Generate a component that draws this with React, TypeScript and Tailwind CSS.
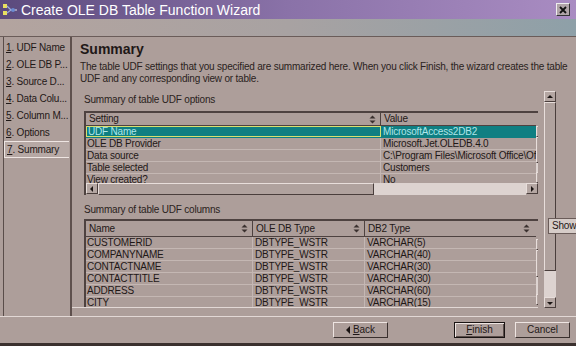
import React from "react";

// --- wizard steps on the left ---
const steps = [
  { n: "1", label: "UDF Name" },
  { n: "2", label: "OLE DB P..." },
  { n: "3", label: "Source D..." },
  { n: "4", label: "Data Colu..." },
  { n: "5", label: "Column M..." },
  { n: "6", label: "Options" },
  { n: "7", label: "Summary" },
];

const options = [
  ["UDF Name", "MicrosoftAccess2DB2"],
  ["OLE DB Provider", "Microsoft.Jet.OLEDB.4.0"],
  ["Data source", "C:\\Program Files\\Microsoft Office\\Office\\Samples"],
  ["Table selected", "Customers"],
  ["View created?", "No"],
];

const columns = [
  ["CUSTOMERID", "DBTYPE_WSTR", "VARCHAR(5)"],
  ["COMPANYNAME", "DBTYPE_WSTR", "VARCHAR(40)"],
  ["CONTACTNAME", "DBTYPE_WSTR", "VARCHAR(30)"],
  ["CONTACTTITLE", "DBTYPE_WSTR", "VARCHAR(30)"],
  ["ADDRESS", "DBTYPE_WSTR", "VARCHAR(60)"],
  ["CITY", "DBTYPE_WSTR", "VARCHAR(15)"],
];

const SortIcon = () => (
  <svg width="7" height="9" viewBox="0 0 7 9" className="shrink-0">
    <path d="M3.5 0.5 L6.5 3.5 H0.5 Z" fill="#3a302e" />
    <path d="M3.5 8.5 L6.5 5.5 H0.5 Z" fill="#3a302e" />
  </svg>
);

const Arrow = ({ dir }: { dir: "up" | "down" | "left" | "right" }) => {
  const d = {
    up: "M1 5 L4 2 L7 5 Z",
    down: "M1 3 L4 6 L7 3 Z",
    left: "M5 1 L2 4 L5 7 Z",
    right: "M3 1 L6 4 L3 7 Z",
  }[dir];
  return (
    <div className="w-[12px] h-[11px] bg-[#b4a6a2] border border-t-[#e8dedb] border-l-[#e8dedb] border-b-[#4a3e3c] border-r-[#4a3e3c] flex items-center justify-center shrink-0">
      <svg width="8" height="8" viewBox="0 0 8 8">
        <path d={d} fill="#1a1413" />
      </svg>
    </div>
  );
};

const VScroll = ({ h, thumb }: { h: string; thumb: string }) => (
  <div className={`w-[12px] ${h} flex flex-col shrink-0`}>
    <Arrow dir="up" />
    <div className={`${thumb} shrink-0 border border-t-[#e8dedb] border-l-[#e8dedb] border-b-[#4a3e3c] border-r-[#4a3e3c] bg-[#b0a29e]`} />
    <div className="flex-1 bg-[#ddd3d0]" />
    <Arrow dir="down" />
  </div>
);

export default function App() {
  return (
    <div className="relative w-[576px] h-[346px] overflow-hidden bg-[#ad9e9a] flex flex-col font-['Liberation_Sans',Arial,sans-serif] text-[10px] tracking-[-0.2px] text-[#1f1817] leading-none">
      {/* title bar */}
      <div className="h-[19px] shrink-0 flex items-center bg-gradient-to-r from-[#5b4a7d] via-[#8a72a8] to-[#a98cc2] pl-[2px] pr-[6px] tracking-normal">
        <svg width="16" height="14" viewBox="0 0 16 14" className="shrink-0">
          <rect x="1" y="1" width="4" height="4" fill="#e8e060" />
          <rect x="1" y="8" width="4" height="4" fill="#e8e060" />
          <path d="M5 3 L9 7 L5 10" stroke="#9ad" strokeWidth="1.2" fill="none" />
          <path d="M9 7 H15" stroke="#ccd" strokeWidth="1.2" />
          <circle cx="11" cy="7" r="2" fill="#6a8ad0" />
        </svg>
        <span className="ml-[3px] text-white text-[14px]">Create OLE DB Table Function Wizard</span>
        <div className="ml-auto w-[14px] h-[13px] bg-[#b0a4a8] border border-t-[#eee] border-l-[#eee] border-b-[#333] border-r-[#333] flex items-center justify-center">
          <svg width="8" height="8" viewBox="0 0 8 8">
            <path d="M1 1 L7 7 M7 1 L1 7" stroke="#111" strokeWidth="1.8" />
          </svg>
        </div>
      </div>

      {/* band below title */}
      <div className="h-[18px] shrink-0 bg-gradient-to-r from-[#b3a49f] via-[#a8a2a2] to-[#8ea0a8] border-b border-[#6a5c59]" />

      {/* main area */}
      <div className="flex h-[280px] shrink-0 border-b border-[#e2d8d5]">
        {/* steps */}
        <nav className="w-[69px] shrink-0 ml-[3px] border-l border-[#5a4d4a] border-r-2 border-r-[#5e504d] flex flex-col pt-[2px]">
          {steps.map((s) => (
            <div
              key={s.n}
              className={`h-[17px] flex items-center pl-[2px] whitespace-nowrap ${
                s.n === "7" ? "bg-[#b6a8a4] border border-[#eee5e2] border-r-0 pl-[1px] mr-[1px]" : ""
              }`}
            >
              <span className="underline">{s.n}</span>
              <span>.&nbsp;{s.label}</span>
            </div>
          ))}
        </nav>

        {/* content */}
        <div className="flex-1 flex flex-col min-w-0">
          <div className="pl-[8px] pt-[3px]">
            <h1 className="text-[14px] font-bold h-[18px] flex items-center tracking-normal">Summary</h1>
            <p className="mt-[3px] leading-[12px] text-[#2a2220] whitespace-nowrap">
              The table UDF settings that you specified are summarized here. When you click Finish, the wizard creates the table
              <br />
              UDF and any corresponding view or table.
            </p>
          </div>

          <div className="flex mt-[6px] h-[217px] shrink-0">
            {/* scrolled area */}
            <div className="w-[466px] pl-[12px] flex flex-col overflow-hidden border-b border-[#e2d8d5]">
              <div className="h-[14px] mt-[2px] flex items-center text-[#2a2220] shrink-0">Summary of table UDF options</div>

              {/* options table */}
              <div className="mt-[4px] w-[464px] border-t-2 border-l-2 border-[#4e4240] flex flex-col shrink-0">
                <div className="flex">
                  <div className="flex-1 min-w-0">
                    <div className="flex h-[13px] border-b border-[#4e4240]">
                      <div className="w-[295px] flex items-center justify-between pl-[3px] pr-[4px] border-r border-[#4e4240]">
                        <span>Setting</span>
                        <SortIcon />
                      </div>
                      <div className="flex-1 flex items-center pl-[3px]">Value</div>
                    </div>
                    <div className="h-[57px] overflow-hidden">
                      {options.map(([k, v], i) => (
                        <div
                          key={k}
                          className={`flex h-[12px] border-b ${
                            i === 0 ? "bg-[#0f7f82] text-[#aee6ea] border-[#0f7f82]" : "border-[#c4b7b3]"
                          }`}
                        >
                          <div
                            className={`w-[295px] flex items-center pl-[1px] whitespace-nowrap ${
                              i === 0 ? "border border-[#d8e070]" : "border-r border-[#c4b7b3]"
                            }`}
                          >
                            {k}
                          </div>
                          <div className="flex-1 flex items-center pl-[2px] whitespace-nowrap overflow-hidden">{v}</div>
                        </div>
                      ))}
                    </div>
                  </div>
                  <div className="w-[12px] pt-[13px] shrink-0">
                    <VScroll h="h-[57px]" thumb="h-[26px]" />
                  </div>
                </div>
                {/* horizontal scrollbar */}
                <div className="flex h-[12px] w-[452px]">
                  <Arrow dir="left" />
                  <div className="w-[276px] border border-t-[#e8dedb] border-l-[#e8dedb] border-b-[#4a3e3c] border-r-[#4a3e3c] bg-[#b0a29e]" />
                  <div className="flex-1 bg-[#ddd3d0]" />
                  <Arrow dir="right" />
                </div>
              </div>

              <div className="h-[14px] mt-[8px] flex items-center text-[#2a2220] shrink-0">Summary of table UDF columns</div>

              {/* columns table */}
              <div className="mt-[2px] w-[464px] border-t-2 border-l-2 border-[#4e4240] flex shrink-0">
                <div className="flex-1 min-w-0">
                  <div className="flex h-[16px] border-b border-[#4e4240]">
                    <div className="w-[167px] flex items-center justify-between pl-[3px] pr-[4px] border-r border-[#4e4240]">
                      <span>Name</span>
                      <SortIcon />
                    </div>
                    <div className="w-[112px] flex items-center justify-between pl-[3px] pr-[4px] border-r border-[#4e4240]">
                      <span>OLE DB Type</span>
                      <SortIcon />
                    </div>
                    <div className="flex-1 flex items-center justify-between pl-[3px] pr-[6px]">
                      <span>DB2 Type</span>
                      <SortIcon />
                    </div>
                  </div>
                  {columns.map(([a, b, c]) => (
                    <div key={a} className="flex h-[12px] border-b border-[#c4b7b3]">
                      <div className="w-[167px] flex items-center pl-[1px] border-r border-[#c4b7b3]">{a}</div>
                      <div className="w-[112px] flex items-center pl-[2px] border-r border-[#c4b7b3]">{b}</div>
                      <div className="flex-1 flex items-center pl-[2px]">{c}</div>
                    </div>
                  ))}
                </div>
                <div className="w-[12px] pt-[18px] shrink-0">
                  <VScroll h="h-[66px]" thumb="h-[27px]" />
                </div>
              </div>
            </div>

            {/* outer scrollbar */}
            <div className="ml-[6px] flex flex-col">
              <VScroll h="h-[217px]" thumb="h-[169px]" />
            </div>
          </div>
        </div>
      </div>

      {/* buttons */}
      <div className="flex-1 flex items-start pt-[5px] pl-[333px] border-b-[3px] border-[#3a302e] tracking-normal">
        <button className="w-[55px] h-[16px] bg-[#ad9e9a] border border-t-[#eee5e2] border-l-[#eee5e2] border-b-[#3a302e] border-r-[#3a302e] flex items-center justify-center text-[10px]">
          <svg width="5" height="8" viewBox="0 0 5 8" className="mr-[2px]">
            <path d="M4 0 L0 4 L4 8 Z" fill="#1a1413" />
          </svg>
          <span className="underline">B</span>ack
        </button>
        <button className="ml-[66px] w-[51px] h-[16px] bg-[#ad9e9a] border border-[#1a1413] flex items-center justify-center text-[10px] shadow-[inset_1px_1px_0_#eee5e2,inset_-1px_-1px_0_#5a4d4a]">
          <span className="underline">F</span>inish
        </button>
        <button className="ml-[10px] w-[55px] h-[16px] bg-[#ad9e9a] border border-t-[#eee5e2] border-l-[#eee5e2] border-b-[#3a302e] border-r-[#3a302e] flex items-center justify-center text-[10px]">
          Cancel
        </button>
      </div>

      {/* tooltip */}
      <div className="absolute left-[548px] top-[218px] w-[32px] h-[16px] bg-[#d6ccc8] border border-[#6a5c59] flex items-center pl-[3px] text-[10px]">
        Show
      </div>
    </div>
  );
}
